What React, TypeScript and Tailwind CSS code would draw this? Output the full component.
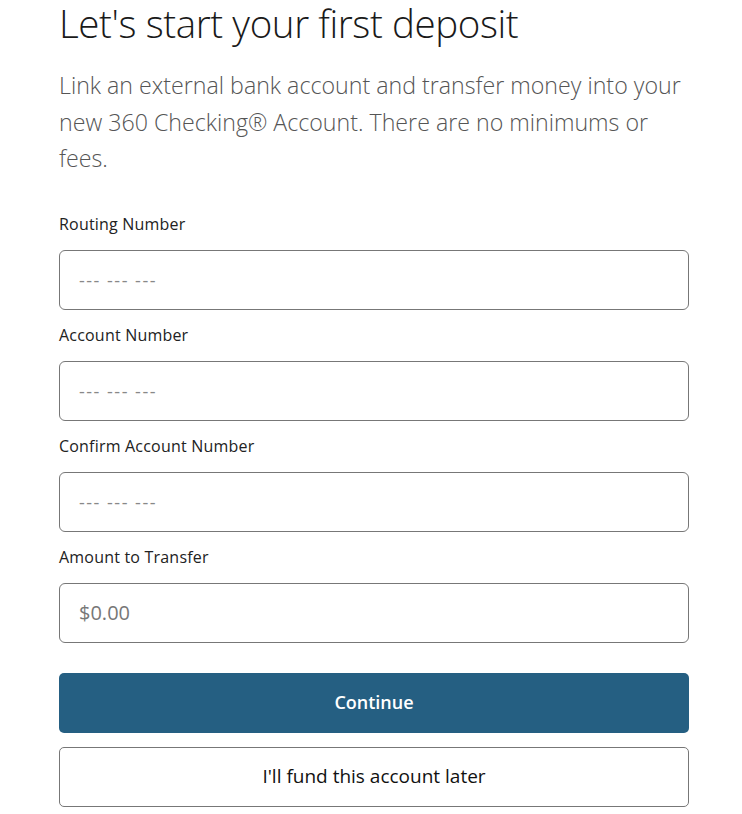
import React from 'react';

const fields = [
  { id: 'routing', label: 'Routing Number', placeholder: '--- --- ---' },
  { id: 'account', label: 'Account Number', placeholder: '--- --- ---' },
  { id: 'confirm', label: 'Confirm Account Number', placeholder: '--- --- ---' },
];

export default function App() {
  return (
    <div className="min-h-screen bg-white" style={{ fontFamily: '"Open Sans", "Noto Sans", sans-serif' }}>
      <div className="w-[630px] ml-[59px]">
        <h1 className="text-[38.5px] leading-[46px] font-light text-[#1a1a1a] tracking-[-0.4px]">
          Let's start your first deposit
        </h1>
        <p className="mt-[21px] w-[630px] text-[23.2px] leading-[36.5px] font-light text-[#555]">
          Link an external bank account and transfer money into your new 360 Checking® Account. There are no minimums or fees.
        </p>

        <form className="mt-[37px]" onSubmit={(e) => e.preventDefault()}>
          {fields.map((f) => (
            <div key={f.id} className="mb-[15px]">
              <label htmlFor={f.id} className="block text-[16px] leading-[20px] tracking-[0.2px] text-[#222] mb-[16px]">
                {f.label}
              </label>
              <input
                id={f.id}
                type="text"
                placeholder={f.placeholder}
                className="w-full h-[60px] rounded-[6px] border border-[#777] px-[19px] text-[18px] tracking-[1.5px] placeholder:text-[#888] outline-none"
              />
            </div>
          ))}
          <div>
            <label htmlFor="amount" className="block text-[16px] leading-[20px] tracking-[0.2px] text-[#222] mb-[16px]">
              Amount to Transfer
            </label>
            <input
              id="amount"
              type="text"
              placeholder="$0.00"
              className="w-full h-[60px] rounded-[6px] border border-[#777] px-[19px] text-[20px] placeholder:text-[#777] outline-none"
            />
          </div>

          <button
            type="submit"
            className="mt-[30px] w-full h-[60px] rounded-[5px] bg-[#255f82] text-white text-[18px] font-semibold"
          >
            Continue
          </button>
          <button
            type="button"
            className="mt-[14px] w-full h-[60px] rounded-[5px] border border-[#777] bg-white text-[#111] text-[19px]"
          >
            I'll fund this account later
          </button>
        </form>
      </div>
    </div>
  );
}
